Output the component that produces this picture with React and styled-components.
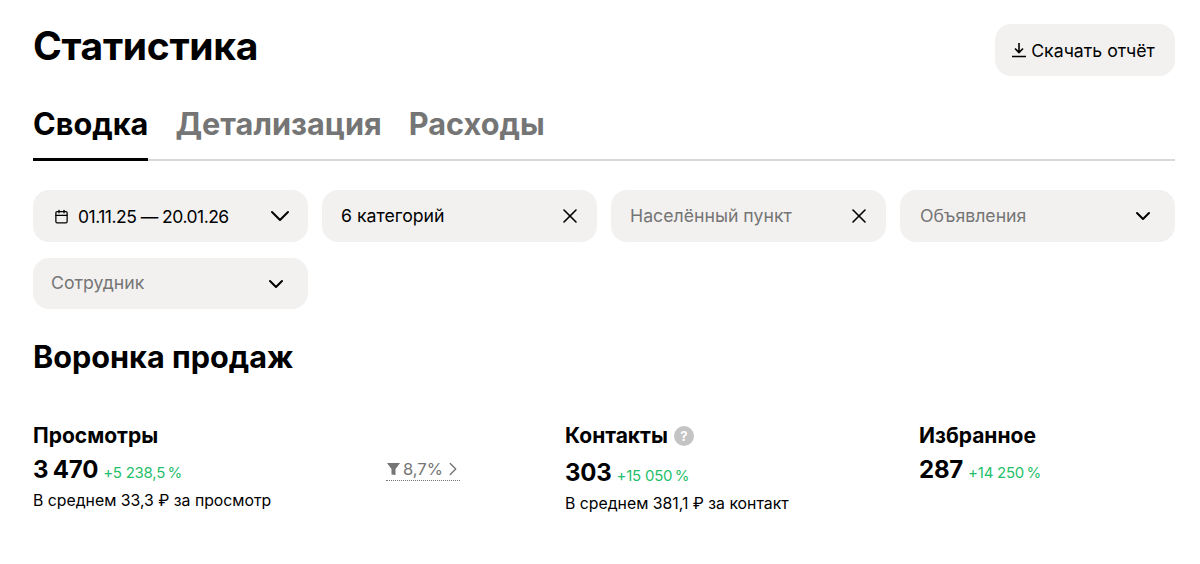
import React from 'react'
import styled, { createGlobalStyle } from 'styled-components'
import { Calendar, ChevronDown, X, ChevronRight } from 'lucide-react'

const GlobalStyle = createGlobalStyle`
  body {
    margin: 0;
    background: #fff;
    font-family: Inter, "Liberation Sans", sans-serif;
    color: #000;
  }
`

const Page = styled.div`
  padding: 24px 25px 0 33px;
  height: 540px;
  overflow: hidden;
`

const Header = styled.div`
  display: flex;
  justify-content: space-between;
  align-items: flex-start;
`

const Title = styled.h1`
  margin: 0;
  font-size: 39px;
  line-height: 44px;
  font-weight: 700;
  letter-spacing: -0.3px;
`

const DownloadButton = styled.button`
  width: 180px;
  height: 52px;
  display: flex;
  align-items: center;
  justify-content: center;
  gap: 4px;
  padding: 0 4px 0 0;
  border: 0;
  border-radius: 16px;
  background: #f2f1f0;
  color: #000;
  font: 400 17.7px Inter, sans-serif;
`

const Tabs = styled.div`
  display: flex;
  gap: 27px;
  margin-top: 25px;
  border-bottom: 2px solid #d8d8d8;
`

const Tab = styled.div`
  font-size: 30.7px;
  line-height: 36px;
  font-weight: 700;
  padding: 5px 0 16px;
  margin-bottom: -2px;
  color: ${p => (p.$active ? '#000' : '#757575')};
  border-bottom: 3px solid ${p => (p.$active ? '#000' : 'transparent')};
`

const Filters = styled.div`
  display: grid;
  grid-template-columns: repeat(4, 1fr);
  grid-template-rows: 52px 51px;
  gap: 16px 14px;
  margin-top: 29px;
`

const Filter = styled.div`
  display: flex;
  align-items: center;
  justify-content: space-between;
  padding: 0 ${p => p.$iconPad || 18}px 0 ${p => p.$textPad || 19}px;
  border-radius: 16px;
  background: #f2f1f0;
  font-size: 17.7px;
  white-space: nowrap;
  color: ${p => (p.$muted ? '#757575' : '#000')};
`

const FilterLabel = styled.span`
  padding-bottom: 2px;
`

const DateValue = styled.span`
  display: flex;
  align-items: center;
  gap: 9px;
  margin-left: 2px;
  font-size: 17.5px;
  letter-spacing: -0.5px;
`

const SectionTitle = styled.h2`
  margin: 28px 0 0;
  font-size: 30.6px;
  line-height: 40px;
  font-weight: 700;
`

const Funnel = styled.div`
  display: grid;
  grid-template-columns: 353px 179px 354px 1fr;
  margin-top: 46px;
`

const Stat = styled.div``

const StatName = styled.div`
  display: flex;
  align-items: center;
  gap: 6px;
  font-size: 21px;
  line-height: 26px;
  font-weight: 700;
`

const HelpIcon = styled.span`
  width: 20px;
  height: 20px;
  border-radius: 50%;
  background: #c4c4c4;
  color: #fff;
  font-size: 13px;
  font-weight: 700;
  display: flex;
  align-items: center;
  justify-content: center;
`

const StatRow = styled.div`
  display: flex;
  align-items: baseline;
  gap: 5px;
  margin-top: ${p => (p.$low ? '9px' : '6px')};
`

const StatValue = styled.span`
  font-size: 24px;
  line-height: 30px;
  font-weight: 700;
  letter-spacing: -0.2px;
  word-spacing: -1px;
`

const Growth = styled.span`
  font-size: 15px;
  letter-spacing: -0.25px;
  color: #1fbf6b;
  white-space: nowrap;
`

const StatNote = styled.div`
  font-size: 15.8px;
  line-height: 22px;
  margin-top: 5px;
`

const Step = styled.div`
  width: 74px;
  height: 22px;
  margin-top: 35px;
  display: flex;
  align-items: center;
  gap: 2px;
  color: #757575;
  font-size: 16.5px;
  white-space: nowrap;
  border-bottom: 1px dotted #757575;
  svg {
    flex-shrink: 0;
  }
`

const StepArrow = styled(ChevronRight)`
  margin-left: -3px;
`

const DownloadIcon = () => (
  <svg width="16" height="16" viewBox="0 0 16 16" fill="none" stroke="#000" strokeWidth="1.6">
    <path d="M8 1v9M4 6.5L8 10.5L12 6.5M1 14.5h14" />
  </svg>
)

const FunnelIcon = () => (
  <svg width="15" height="14" viewBox="0 0 15 14">
    <path d="M1 1h13L9.5 7v6l-4-0.5V7z" fill="#757575" />
  </svg>
)

const App = () => {
  return (
    <Page>
      <GlobalStyle />
      <Header>
        <Title>Статистика</Title>
        <DownloadButton>
          <DownloadIcon />
          Скачать отчёт
        </DownloadButton>
      </Header>
      <Tabs>
        <Tab $active>Сводка</Tab>
        <Tab>Детализация</Tab>
        <Tab>Расходы</Tab>
      </Tabs>
      <Filters>
        <Filter $iconPad={12}>
          <DateValue><Calendar size={15} />01.11.25 — 20.01.26</DateValue>
          <ChevronDown size={32} strokeWidth={1.5} />
        </Filter>
        <Filter $iconPad={15}>
          <FilterLabel>6 категорий</FilterLabel>
          <X size={24} strokeWidth={1.6} />
        </Filter>
        <Filter $muted $iconPad={15}>
          <FilterLabel>Населённый пункт</FilterLabel>
          <X size={24} strokeWidth={1.6} color="#000" />
        </Filter>
        <Filter $muted $iconPad={20} $textPad={20}>
          <FilterLabel>Объявления</FilterLabel>
          <ChevronDown size={24} color="#000" />
        </Filter>
        <Filter $muted $iconPad={20} $textPad={18}>
          <FilterLabel>Сотрудник</FilterLabel>
          <ChevronDown size={24} color="#000" />
        </Filter>
      </Filters>
      <SectionTitle>Воронка продаж</SectionTitle>
      <Funnel>
        <Stat>
          <StatName>Просмотры</StatName>
          <StatRow>
            <StatValue>3 470</StatValue>
            <Growth>+5 238,5{'\u2009'}%</Growth>
          </StatRow>
          <StatNote>В среднем 33,3 ₽ за просмотр</StatNote>
        </Stat>
        <Step>
          <FunnelIcon />
          8,7%
          <StepArrow size={22} strokeWidth={1.5} />
        </Step>
        <Stat>
          <StatName>Контакты<HelpIcon>?</HelpIcon></StatName>
          <StatRow $low>
            <StatValue>303</StatValue>
            <Growth>+15 050{'\u2009'}%</Growth>
          </StatRow>
          <StatNote>В среднем 381,1 ₽ за контакт</StatNote>
        </Stat>
        <Stat>
          <StatName>Избранное</StatName>
          <StatRow>
            <StatValue>287</StatValue>
            <Growth>+14 250{'\u2009'}%</Growth>
          </StatRow>
        </Stat>
      </Funnel>
    </Page>
  )
}

export default App
